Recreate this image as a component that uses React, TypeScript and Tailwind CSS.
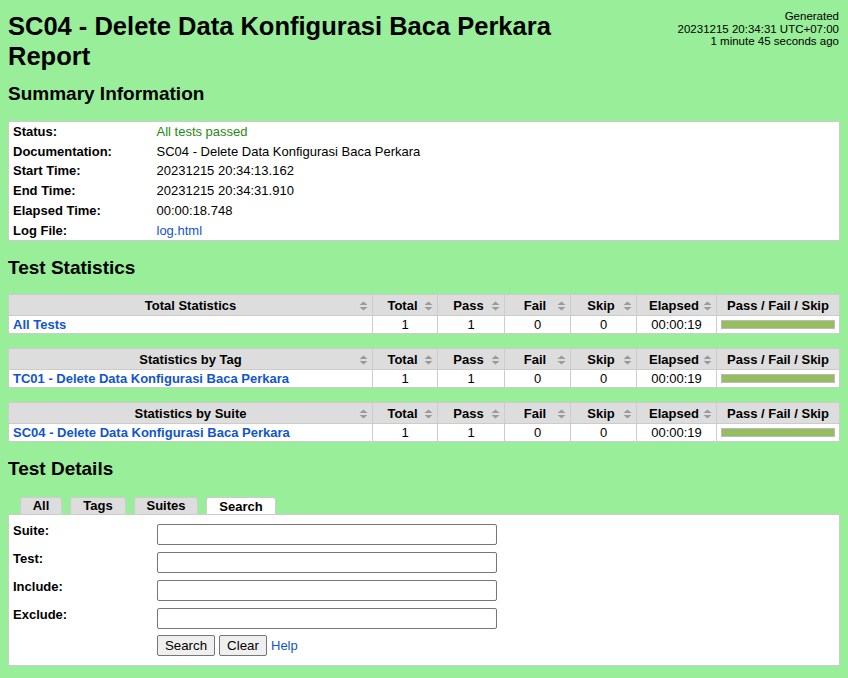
import React from "react";

const LINK = "text-[#1155cc]";

function SortIcon() {
  return (
    <svg width="9" height="10" viewBox="0 0 9 10" className="shrink-0">
      <path d="M4.5 0.5 L8.5 4 L0.5 4 Z" fill="#9a9a9a" />
      <path d="M0.5 6 L8.5 6 L4.5 9.5 Z" fill="#9a9a9a" />
    </svg>
  );
}

type StatRow = { name: string; total: number; pass: number; fail: number; skip: number; elapsed: string };

function StatsTable({ title, row }: { title: string; row: StatRow }) {
  const heads = ["Total", "Pass", "Fail", "Skip", "Elapsed"];
  const widths = ["w-[65px]", "w-[67px]", "w-[66px]", "w-[66px]", "w-[80px]"];
  return (
    <table className="w-[832px] table-fixed border-collapse mb-[14px] text-[13px] leading-[15px]">
      <colgroup>
        <col />
        {widths.map((w, i) => (
          <col key={i} className={w} />
        ))}
        <col className="w-[123px]" />
      </colgroup>
      <thead>
        <tr className="bg-[#dddddd]">
          <th className="border border-[#cccccc] px-[4px] pt-[3px] pb-[2px] font-bold">
            <div className="flex items-center">
              <span className="flex-1 text-center pl-[9px]">{title}</span>
              <SortIcon />
            </div>
          </th>
          {heads.map((h) => (
            <th key={h} className="border border-[#cccccc] px-[4px] pt-[3px] pb-[2px] font-bold">
              <div className="flex items-center">
                <span className="flex-1 text-center pl-[4px]">{h}</span>
                <SortIcon />
              </div>
            </th>
          ))}
          <th className="border border-[#cccccc] px-[4px] pt-[3px] pb-[2px] font-bold text-center">
            Pass / Fail / Skip
          </th>
        </tr>
      </thead>
      <tbody>
        <tr className="bg-white">
          <td className="border border-[#cccccc] px-[4px] py-[1px]">
            <a className={`${LINK} font-bold`}>{row.name}</a>
          </td>
          <td className="border border-[#cccccc] px-[4px] py-[1px] text-center">{row.total}</td>
          <td className="border border-[#cccccc] px-[4px] py-[1px] text-center">{row.pass}</td>
          <td className="border border-[#cccccc] px-[4px] py-[1px] text-center">{row.fail}</td>
          <td className="border border-[#cccccc] px-[4px] py-[1px] text-center">{row.skip}</td>
          <td className="border border-[#cccccc] px-[4px] py-[1px] text-center">{row.elapsed}</td>
          <td className="border border-[#cccccc] px-[4px] py-[1px] align-middle">
            <div className="h-[9px] border border-[#bbbbbb] bg-[#97bd61]" />
          </td>
        </tr>
      </tbody>
    </table>
  );
}

export default function App() {
  const summary: [string, React.ReactNode][] = [
    ["Status:", <span className="text-[#1f8a10]">All tests passed</span>],
    ["Documentation:", "SC04 - Delete Data Konfigurasi Baca Perkara"],
    ["Start Time:", "20231215 20:34:13.162"],
    ["End Time:", "20231215 20:34:31.910"],
    ["Elapsed Time:", "00:00:18.748"],
    ["Log File:", <a className={LINK}>log.html</a>],
  ];

  const searchFields = ["Suite:", "Test:", "Include:", "Exclude:"];
  const tabs = [
    { label: "All", w: "w-[42px]" },
    { label: "Tags", w: "w-[56px]" },
    { label: "Suites", w: "w-[64px]" },
  ];

  return (
    <div
      className="min-h-screen bg-[#99ee99] text-black pl-[8px] pb-[12px]"
      style={{ fontFamily: '"Liberation Sans", Arial, Helvetica, sans-serif' }}
    >
      <div className="w-[832px]">
        {/* header */}
        <div className="flex justify-between items-start">
          <h1 className="w-[600px] mt-[11px] text-[25.5px] leading-[30px] font-bold">
            SC04 - Delete Data Konfigurasi Baca Perkara Report
          </h1>
          <div className="mt-[10px] mr-[1px] text-right text-[11.5px] leading-[12.6px] whitespace-nowrap">
            <div>Generated</div>
            <div>20231215 20:34:31 UTC+07:00</div>
            <div>1 minute 45 seconds ago</div>
          </div>
        </div>

        <h2 className="mt-[12px] mb-[16px] text-[19px] leading-[22px] font-bold">Summary Information</h2>

        <table className="w-[832px] table-fixed border border-[#cccccc] bg-white text-[13px] leading-[15.7px]">
          <colgroup>
            <col className="w-[148px]" />
            <col />
          </colgroup>
          <tbody>
            {summary.map(([k, v]) => (
              <tr key={k}>
                <th className="text-left font-bold px-[4px] py-[2px] align-top">{k}</th>
                <td className="px-[0px] py-[2px] align-top">{v}</td>
              </tr>
            ))}
          </tbody>
        </table>

        <h2 className="mt-[16px] mb-[15px] text-[19px] leading-[22px] font-bold">Test Statistics</h2>

        <StatsTable
          title="Total Statistics"
          row={{ name: "All Tests", total: 1, pass: 1, fail: 0, skip: 0, elapsed: "00:00:19" }}
        />
        <StatsTable
          title="Statistics by Tag"
          row={{
            name: "TC01 - Delete Data Konfigurasi Baca Perkara",
            total: 1,
            pass: 1,
            fail: 0,
            skip: 0,
            elapsed: "00:00:19",
          }}
        />
        <StatsTable
          title="Statistics by Suite"
          row={{
            name: "SC04 - Delete Data Konfigurasi Baca Perkara",
            total: 1,
            pass: 1,
            fail: 0,
            skip: 0,
            elapsed: "00:00:19",
          }}
        />

        <h2 className="mt-[16px] mb-[16px] text-[19px] leading-[22px] font-bold">Test Details</h2>

        {/* tabs */}
        <div className="flex items-end gap-[8px] pl-[12px] h-[18px] text-[13px] font-bold">
          {tabs.map((t) => (
            <div
              key={t.label}
              className={`${t.w} h-[17px] leading-[16px] text-center bg-[#dddddd] border border-b-0 border-[#cccccc] rounded-t-[3px]`}
            >
              {t.label}
            </div>
          ))}
          <div className="w-[70px] h-[17px] leading-[18px] text-center bg-white border border-b-0 border-[#cccccc] rounded-t-[3px]">
            Search
          </div>
        </div>

        {/* search panel */}
        <div className="bg-white border border-[#cccccc] pt-[7px] pb-[9px] pl-[4px] text-[13px]">
          {searchFields.map((f) => (
            <div key={f} className="flex items-start h-[28px]">
              <div className="w-[144px] font-bold leading-[15px] pt-[1px]">{f}</div>
              <input
                type="text"
                className="mt-[2px] w-[340px] h-[21px] border border-[#767676] rounded-[2px] bg-white outline-none"
              />
            </div>
          ))}
          <div className="flex items-center gap-[4px] pl-[144px] pt-[1px]">
            <button className="w-[58px] h-[21px] text-[13.3px] leading-[15px] bg-[#efefef] border border-[#767676] rounded-[2px]">
              Search
            </button>
            <button className="w-[48px] h-[21px] text-[13.3px] leading-[15px] bg-[#efefef] border border-[#767676] rounded-[2px]">
              Clear
            </button>
            <a className={`${LINK} leading-[15px]`}>Help</a>
          </div>
        </div>
      </div>
    </div>
  );
}
